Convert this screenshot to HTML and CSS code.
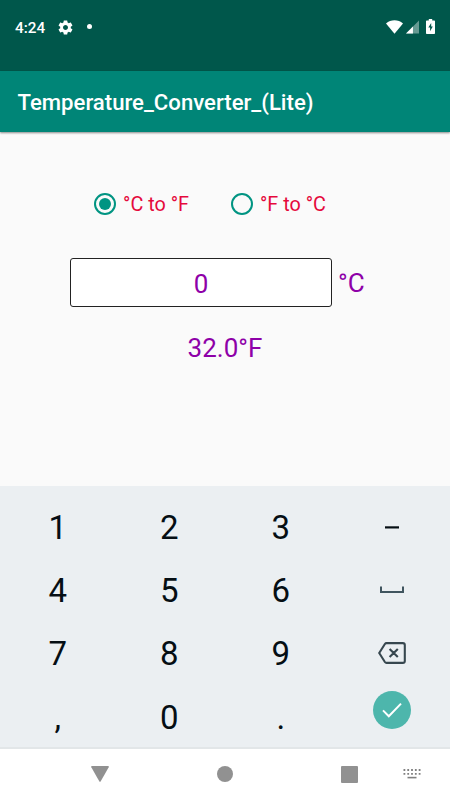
FILE: index.html
```html
<!DOCTYPE html>
<html lang="en">
<head>
  <meta charset="UTF-8">
  <title>Temperature_Converter_(Lite)</title>
  <link rel="stylesheet" href="styles.css">
</head>
<body>

<div class="status-bar">
  <span class="time">4:24</span>
  <svg class="gear" viewBox="0 0 24 24"><path d="M19.43 12.98c.04-.32.07-.64.07-.98s-.03-.66-.07-.98l2.11-1.65c.19-.15.24-.42.12-.64l-2-3.46c-.12-.22-.39-.3-.61-.22l-2.49 1c-.52-.4-1.08-.73-1.69-.98l-.38-2.65C14.46 2.18 14.25 2 14 2h-4c-.25 0-.46.18-.49.42l-.38 2.65c-.61.25-1.17.59-1.69.98l-2.49-1c-.23-.09-.49 0-.61.22l-2 3.46c-.13.22-.07.49.12.64l2.11 1.65c-.04.32-.07.65-.07.98s.03.66.07.98l-2.11 1.65c-.19.15-.24.42-.12.64l2 3.46c.12.22.39.3.61.22l2.49-1c.52.4 1.08.73 1.69.98l.38 2.65c.03.24.24.42.49.42h4c.25 0 .46-.18.49-.42l.38-2.65c.61-.25 1.17-.59 1.69-.98l2.49 1c.23.09.49 0 .61-.22l2-3.46c.12-.22.07-.49-.12-.64l-2.11-1.65zM12 15.5c-1.93 0-3.5-1.57-3.5-3.5s1.57-3.5 3.5-3.5 3.5 1.57 3.5 3.5-1.57 3.5-3.5 3.5z"/></svg>
  <span class="dot"></span>
  <svg class="wifi" viewBox="0 0 17 14"><path d="M0 3.4C4.8-.9 12.2-.9 17 3.4L8.5 13.8z"/></svg>
  <svg class="signal" viewBox="0 0 14 14"><path d="M14 0v14H0z" opacity=".4"/><path d="M7.5 6.5V14H0z"/></svg>
  <svg class="battery" viewBox="0 0 9 15"><path fill-rule="evenodd" d="M2.8 0h3.4v1.5h2Q9 1.5 9 2.3v11.9q0 .8-.8.8H.8q-.8 0-.8-.8V2.3q0-.8.8-.8h2zM5.2 4L2.3 8.6h1.8V12.2L6.8 7.4H5.2z"/></svg>
</div>

<div class="app-bar">Temperature_Converter_(Lite)</div>

<div class="main">
  <div class="modes">
    <label class="mode"><span class="radio checked"></span>°C to °F</label>
    <label class="mode"><span class="radio"></span>°F to °C</label>
  </div>
  <div class="entry">
    <div class="value">0</div>
    <span class="unit">°C</span>
  </div>
  <div class="result">32.0°F</div>
</div>

<div class="keyboard">
  <div class="key">1</div>
  <div class="key">2</div>
  <div class="key">3</div>
  <div class="key"><svg width="14" height="3" viewBox="0 0 14 3"><path d="M0 .3h14v2.2H0z" fill="#050e14"/></svg></div>
  <div class="key">4</div>
  <div class="key">5</div>
  <div class="key">6</div>
  <div class="key"><svg width="26" height="8" viewBox="0 0 26 8"><path d="M2 .5v5.5h22V.5" fill="none" stroke="#40555f" stroke-width="2"/></svg></div>
  <div class="key">7</div>
  <div class="key">8</div>
  <div class="key">9</div>
  <div class="key key-delete"><svg width="28" height="22" viewBox="0 0 28 22"><path d="M8.5 1.1h16.3q2 0 2 2v15.8q0 2-2 2H8.5q-1 0-1.6-.9L1.2 11l5.7-9q.6-.9 1.6-.9zM11.6 6.9l8.2 8.2M19.8 6.9l-8.2 8.2" fill="none" stroke="#37474f" stroke-width="2.1"/></svg></div>
  <div class="key">,</div>
  <div class="key">0</div>
  <div class="key">.</div>
  <div class="key key-done"><span class="done"><svg width="20" height="16" viewBox="0 0 20 16"><path d="M1 8.4l5.8 5.8L19 1.6" fill="none" stroke="#fff" stroke-width="2"/></svg></span></div>
</div>

<div class="nav-bar">
  <svg class="back" viewBox="0 0 18 16"><path d="M1 0h16q1.3 0 .7 1.2L9.6 15.4q-.6.8-1.2 0L.3 1.2Q-.3 0 1 0z"/></svg>
  <span class="home"></span>
  <span class="recents"></span>
  <svg class="ime" viewBox="0 0 17 10"><path d="M0 1h17M0 4.8h17" stroke-width="1.8" stroke-dasharray="1.8 2"/><path d="M4 8.6h9" stroke-width="1.6"/></svg>
</div>

</body>
</html>
```
FILE: styles.css
```css
* { box-sizing: border-box; }
body { margin: 0; width: 450px; height: 800px; display: flex; flex-direction: column; overflow: hidden; background: #fafafa; font-family: Roboto, sans-serif; }
svg { display: block; flex: none; }

.status-bar { height: 71px; padding: 19px 15px 0; display: flex; align-items: flex-start; background: #00574b; color: #fff; fill: #fff; }
.time { width: 42px; padding-top: 1px; font-size: 15.3px; line-height: 17px; font-weight: 500; }
.gear { width: 17px; height: 17px; }
.dot { width: 5px; height: 5px; margin: 5px 0 0 13px; border-radius: 50%; background: #fff; }
.wifi { width: 17px; height: 14px; margin: 1px 3px 0 auto; }
.signal { width: 13px; height: 14px; margin: 1px 7px 0 0; }
.battery { width: 9px; height: 15px; }

.app-bar { height: 61px; padding: 1px 17.5px 0; position: relative; line-height: 61px; font-size: 22.15px; font-weight: 500; white-space: nowrap; background: #008577; color: #fff; box-shadow: 0 1px 2px rgba(0, 0, 0, .45); }

.main { height: 354px; padding-top: 60px; color: #8e00a8; }
.modes { display: flex; gap: 42px; padding-left: 94px; }
.mode { display: flex; align-items: center; gap: 7px; height: 24px; font-size: 19.8px; line-height: 25px; color: #e5093c; }
.radio { width: 22px; height: 22px; display: flex; align-items: center; justify-content: center; border: 2px solid #009482; border-radius: 50%; }
.checked::after { content: ""; width: 12px; height: 12px; border-radius: 50%; background: #009482; }
.entry { display: flex; align-items: center; gap: 6px; margin-top: 42px; padding-left: 70px; font-size: 26px; }
.value { width: 262px; height: 49px; padding-top: 1px; border: 1px solid #222; border-radius: 3px; background: #fff; line-height: 48px; text-align: center; }
.unit { padding-top: 1px; line-height: 48px; }
.result { margin-top: 24px; font-size: 26px; line-height: 34px; text-align: center; }

.keyboard { height: 263px; padding: 9px 2px 0; display: grid; grid-template-columns: repeat(4, 111.5px); grid-template-rows: repeat(4, 63.3px); background: #ebeff2; border-bottom: 2px solid #e2e6e8; }
.key { display: flex; align-items: center; justify-content: center; padding-top: 1px; font-size: 33px; color: #050e14; }
.key-delete { padding-top: 0; }
.key-done { align-items: flex-start; padding-top: 6px; }
.done { width: 38px; height: 38px; display: flex; align-items: center; justify-content: center; border-radius: 50%; background: #4db6ac; }

.nav-bar { height: 51px; padding: 0 29px 1px 91px; display: flex; align-items: center; background: #fff; fill: #919191; }
.back { width: 18px; height: 16px; margin-right: 108px; }
.home { width: 16px; height: 16px; margin-right: 108px; border-radius: 50%; background: #919191; }
.recents { width: 17px; height: 17px; margin-right: auto; border-radius: 1px; background: #919191; }
.ime { width: 18px; height: 10px; fill: none; stroke: #808080; }
```
